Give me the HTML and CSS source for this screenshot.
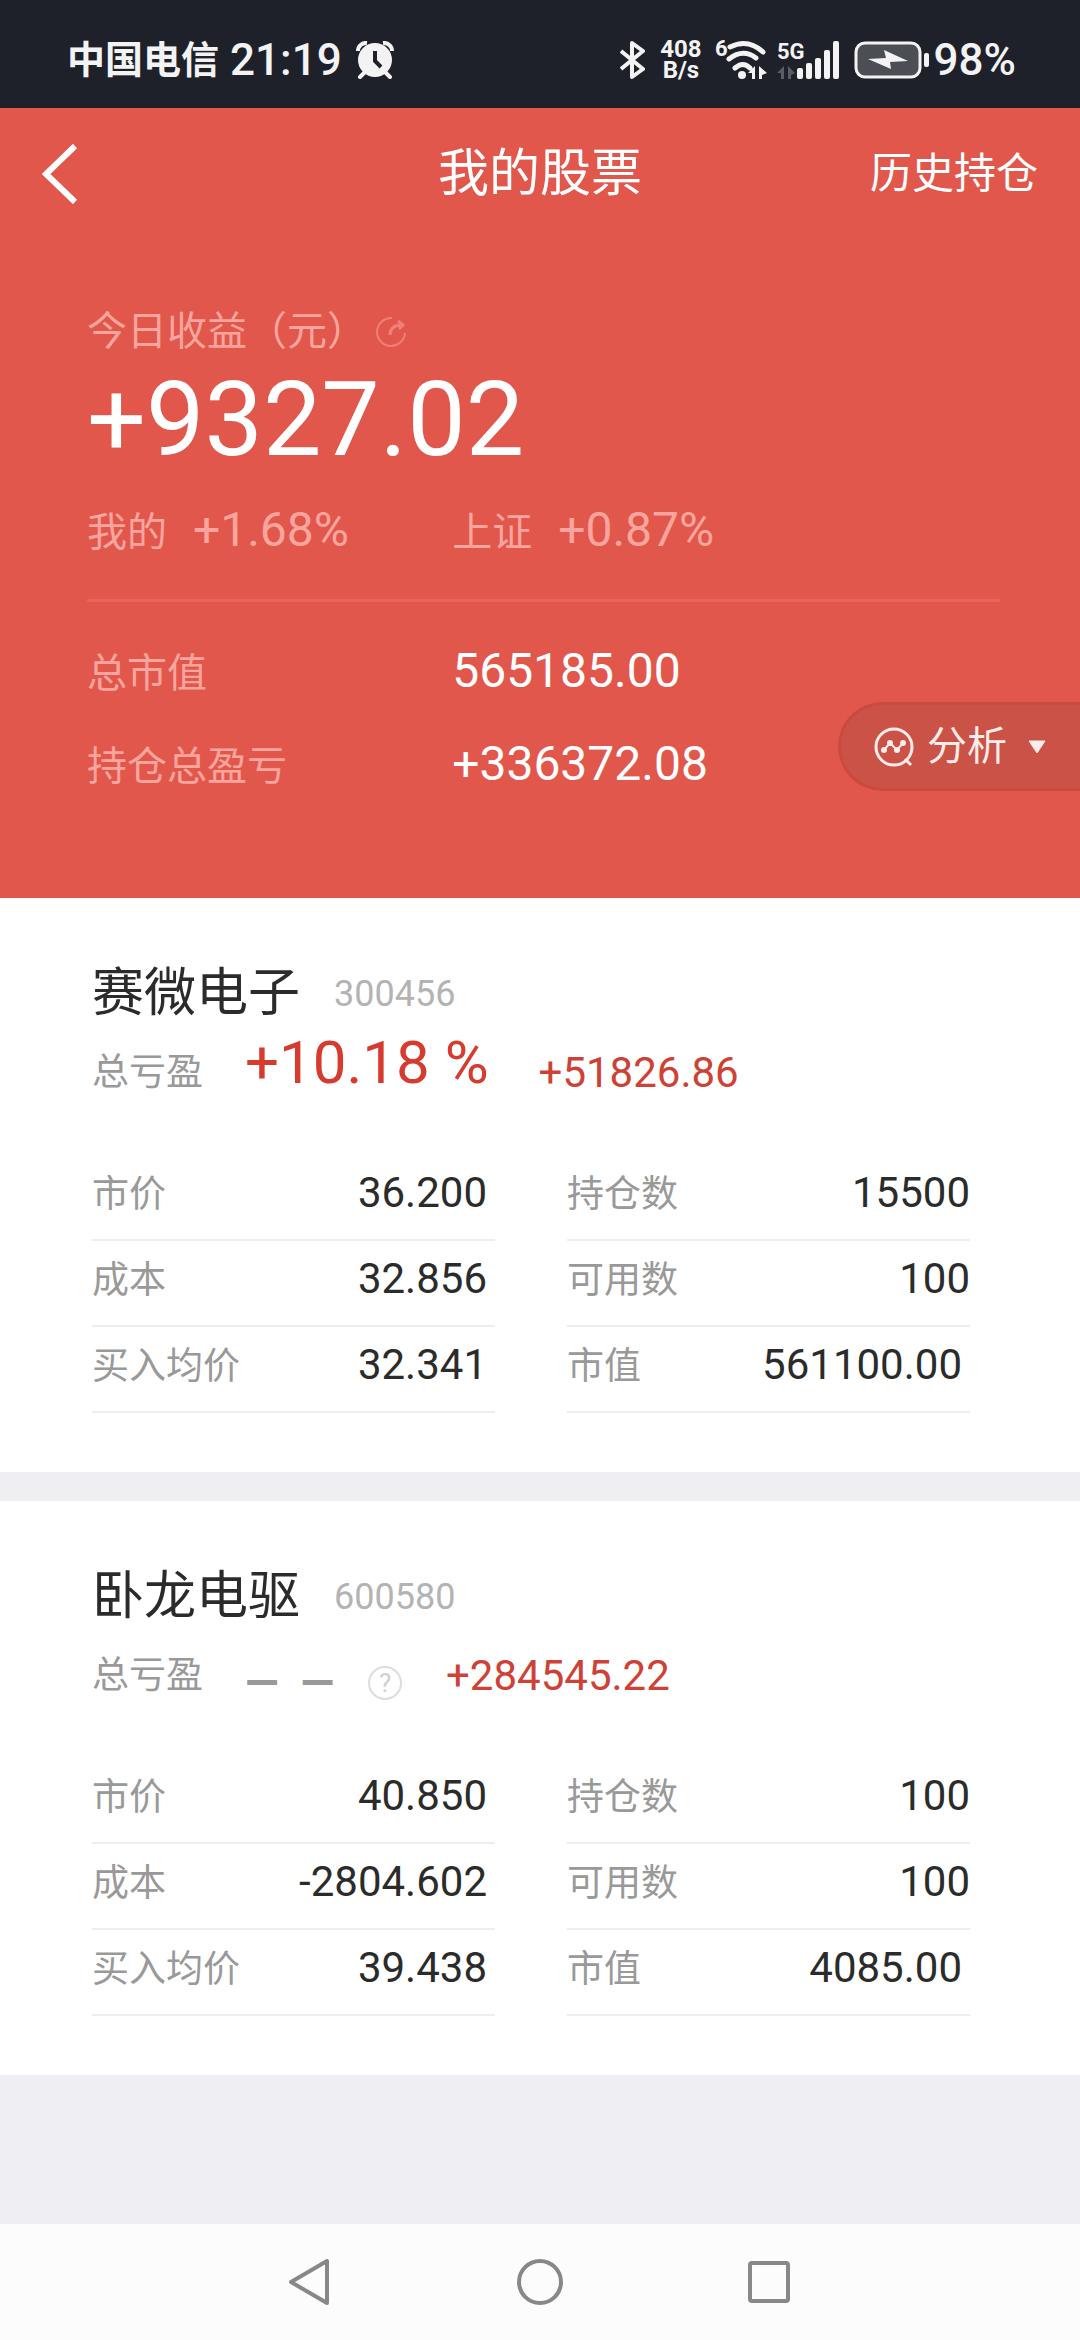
FILE: index.html
```html
<!DOCTYPE html>
<html lang="zh-CN">

<head>
    <meta charset="UTF-8">
    <meta name="viewport" content="width=device-width, initial-scale=1.0">
    <title>我的股票</title>
    <link rel="stylesheet" href="styles.css">
</head>

<body>
    <div class="status-bar">
        <div class="status-left">
            <span class="carrier">中国电信</span>
            <span class="clock">21:19</span>
            <svg class="alarm" width="38" height="38" viewBox="0 0 38 38">
                <path d="M2 10a8 8 0 0 1 9-8M36 10a8 8 0 0 0-9-8" fill="none" stroke="#f3f3f4" stroke-width="4" />
                <path d="M9 31l-5 5M29 31l5 5" stroke="#f3f3f4" stroke-width="4" stroke-linecap="round" />
                <circle cx="19" cy="19" r="17" fill="#f3f3f4" />
                <path d="M19 10v10l6 6" fill="none" stroke="#1f212a" stroke-width="4" />
            </svg>
        </div>
        <div class="status-right">
            <svg width="26" height="40" viewBox="0 0 26 40">
                <path d="M1 11l22 18-11 8V3l11 8L1 29" fill="none" stroke="#f3f3f4" stroke-width="4" stroke-linejoin="round" />
            </svg>
            <div class="net-speed">
                <span>408</span>
                <span>B/s</span>
            </div>
            <svg class="wifi" width="52" height="42" viewBox="0 0 52 42">
                <text x="0" y="17" class="wifi-gen">6</text>
                <path d="M15 8q18-9 33 5M14 20q14-11 27-1M20 29q8-7 15 0" fill="none" stroke="#f3f3f4" stroke-width="5" stroke-linecap="round" />
                <circle cx="27" cy="36" r="4" fill="#f3f3f4" />
                <path d="M33 34l7-7v13h-3v-6zM44 27l8 7-5 2v4h-3z" fill="#f3f3f4" />
            </svg>
            <svg class="signal" width="64" height="40" viewBox="0 0 64 40">
                <text x="0" y="19" class="signal-gen">5G</text>
                <path d="M0 33l7-7v13H4v-6zM11 26l7 7-4 2v4h-3z" fill="#5b5d64" />
                <g fill="#f3f3f4">
                    <rect x="20" y="28" width="6" height="11" rx="2" />
                    <rect x="29" y="23" width="6" height="16" rx="2" />
                    <rect x="38" y="18" width="6" height="21" rx="2" />
                    <rect x="47" y="10" width="6" height="29" rx="2" />
                    <rect x="56" y="1" width="6" height="38" rx="2" />
                </g>
            </svg>
            <svg class="battery" width="76" height="40" viewBox="0 0 76 40">
                <rect x="2" y="3" width="64" height="34" rx="9" fill="#4c4e56" stroke="#f3f3f4" stroke-width="3" />
                <path d="M14 19l18-1-2-8 24 11-18 1 1 7z" fill="#f3f3f4" />
                <rect x="70" y="13" width="5" height="14" rx="2" fill="#f3f3f4" />
            </svg>
            <span class="battery-level">98%</span>
        </div>
    </div>

    <header class="header">
        <button class="back" aria-label="返回">
            <svg width="36" height="60" viewBox="0 0 36 60">
                <path d="M33 2L4 30l29 28" fill="none" stroke="#fff" stroke-width="6" />
            </svg>
        </button>
        <h1>我的股票</h1>
        <a class="history" href="#">历史持仓</a>
    </header>

    <section class="summary">
        <div class="today-label">
            <span>今日收益（元）</span>
            <svg width="32" height="32" viewBox="0 0 32 32">
                <path d="M17 2A14 14 0 1 0 30 17" fill="none" stroke="#f07f78" stroke-width="2" />
                <path d="M15 19c0-6 3-10 12-10M23 5l5 4-4 4" fill="none" stroke="#f07f78" stroke-width="3" />
            </svg>
        </div>
        <p class="today-value">+9327.02</p>
        <div class="summary-row rates">
            <p><span class="rate-name">我的</span><span>+1.68%</span></p>
            <p><span class="rate-name">上证</span><span>+0.87%</span></p>
        </div>
        <hr>
        <dl class="totals">
            <div class="summary-row">
                <dt>总市值</dt>
                <dd>565185.00</dd>
            </div>
            <div class="summary-row">
                <dt>持仓总盈亏</dt>
                <dd>+336372.08</dd>
            </div>
        </dl>
        <button class="analyse">
            <svg width="40" height="40" viewBox="0 0 40 40">
                <circle cx="20" cy="20" r="18" fill="none" stroke="#fdecea" stroke-width="3" />
                <path d="M31 32l6 6" stroke="#fdecea" stroke-width="3" />
                <path d="M10 23l6-7 7 7 6-7" fill="none" stroke="#fdecea" stroke-width="2" />
                <g fill="#fdecea">
                    <circle cx="10" cy="23" r="3" />
                    <circle cx="16" cy="16" r="3" />
                    <circle cx="23" cy="23" r="3" />
                    <circle cx="29" cy="16" r="3" />
                </g>
            </svg>
            <span>分析</span>
            <svg class="caret" width="18" height="14" viewBox="0 0 18 14">
                <path d="M1 1h16L9 13z" fill="#fdecea" stroke="#fdecea" stroke-linejoin="round" />
            </svg>
        </button>
    </section>

    <main>
        <article class="stock">
            <div class="stock-title">
                <h2>赛微电子</h2>
                <span class="code">300456</span>
            </div>
            <div class="profit">
                <span class="profit-label">总亏盈</span>
                <span class="profit-rate">+10.18 %</span>
                <span class="profit-amount">+51826.86</span>
            </div>
            <dl class="details">
                <div>
                    <dt>市价</dt>
                    <dd>36.200</dd>
                </div>
                <div>
                    <dt>持仓数</dt>
                    <dd>15500</dd>
                </div>
                <div>
                    <dt>成本</dt>
                    <dd>32.856</dd>
                </div>
                <div>
                    <dt>可用数</dt>
                    <dd>100</dd>
                </div>
                <div>
                    <dt>买入均价</dt>
                    <dd>32.341</dd>
                </div>
                <div class="market-value">
                    <dt>市值</dt>
                    <dd>561100.00</dd>
                </div>
            </dl>
        </article>

        <article class="stock">
            <div class="stock-title">
                <h2>卧龙电驱</h2>
                <span class="code">600580</span>
            </div>
            <div class="profit">
                <span class="profit-label">总亏盈</span>
                <span class="profit-empty"><span>—</span><span>—</span></span>
                <button class="help" aria-label="说明">?</button>
                <span class="profit-amount">+284545.22</span>
            </div>
            <dl class="details">
                <div>
                    <dt>市价</dt>
                    <dd>40.850</dd>
                </div>
                <div>
                    <dt>持仓数</dt>
                    <dd>100</dd>
                </div>
                <div>
                    <dt>成本</dt>
                    <dd>-2804.602</dd>
                </div>
                <div>
                    <dt>可用数</dt>
                    <dd>100</dd>
                </div>
                <div>
                    <dt>买入均价</dt>
                    <dd>39.438</dd>
                </div>
                <div class="market-value">
                    <dt>市值</dt>
                    <dd>4085.00</dd>
                </div>
            </dl>
        </article>
    </main>

    <nav class="nav-bar">
        <button aria-label="返回">
            <svg width="48" height="50" viewBox="0 0 48 50">
                <path d="M40 4v42L4 25z" fill="none" stroke="#888" stroke-width="4" stroke-linejoin="round" />
            </svg>
        </button>
        <button aria-label="主页">
            <svg width="48" height="50" viewBox="0 0 48 50">
                <circle cx="24" cy="25" r="21" fill="none" stroke="#888" stroke-width="4" />
            </svg>
        </button>
        <button aria-label="最近任务">
            <svg width="48" height="50" viewBox="0 0 48 50">
                <rect x="5" y="6" width="38" height="38" rx="2" fill="none" stroke="#888" stroke-width="4" />
            </svg>
        </button>
    </nav>
</body>

</html>
```

FILE: styles.css
```css
* {
    box-sizing: border-box;
}

body {
    display: flex;
    flex-direction: column;
    min-height: 100vh;
    margin: 0;
    background-color: #efeef3;
    color: #2b2b2b;
    font-family: Roboto, "Noto Sans CJK SC", sans-serif;
}

h1,
h2,
p,
dl,
dd {
    margin: 0;
    font-weight: normal;
}

button {
    padding: 0;
    border: none;
    background: none;
    color: inherit;
    font-family: inherit;
    cursor: pointer;
}

svg {
    display: block;
    flex: none;
}

/* status bar */
.status-bar {
    display: flex;
    justify-content: space-between;
    align-items: center;
    padding: 36px 64px 24px 67px;
    background-color: #1f212a;
    color: #f3f3f4;
}

.status-left,
.status-right {
    display: flex;
    align-items: center;
    height: 48px;
    line-height: 48px;
}

.carrier {
    font-size: 38px;
    font-weight: bold;
}

.clock,
.battery-level {
    font-size: 44px;
    font-weight: 500;
}

.clock {
    margin: 0 14px 0 11px;
}

.net-speed {
    display: grid;
    margin: 0 13px 0 14px;
    font-size: 24px;
    font-weight: bold;
    line-height: 21px;
    text-align: center;
}

.wifi {
    overflow: visible;
}

.wifi-gen,
.signal-gen {
    fill: #f3f3f4;
    font-size: 22px;
    font-weight: bold;
}

.signal {
    overflow: visible;
    margin: 0 13px 0 10px;
}

.battery-level {
    margin-left: 4px;
}

/* page header */
.header {
    display: grid;
    grid-template-columns: 1fr auto 1fr;
    align-items: center;
    height: 132px;
    padding: 0 42px;
    background-color: #e2574c;
    color: #fff;
    line-height: 56px;
}

.back {
    justify-self: start;
}

.header h1 {
    font-size: 51px;
}

.history {
    justify-self: end;
    color: #fff;
    font-size: 42px;
    text-decoration: none;
}

/* summary */
.summary {
    position: relative;
    padding: 62px 80px 101px 87px;
    background-color: #e2574c;
    color: #fff;
}

.today-label,
.rates,
.totals dt {
    color: #f9a59e;
}

.today-label {
    display: flex;
    align-items: center;
    gap: 8px;
    font-size: 40px;
    line-height: 60px;
}

.today-value {
    font-size: 104px;
    line-height: 116px;
}

.summary-row {
    display: grid;
    grid-template-columns: 40% 1fr;
    font-size: 48px;
    line-height: 60px;
}

.rates {
    margin-top: 22px;
}

.rates p {
    display: flex;
    gap: 26px;
}

.rate-name,
.totals dt {
    padding-top: 3px;
    font-size: 40px;
}

.summary hr {
    height: 3px;
    margin: 36px 0 39px;
    border: none;
    background-color: #e8655c;
}

.totals {
    display: grid;
    gap: 30px;
}

.analyse {
    position: absolute;
    right: 0;
    bottom: 107px;
    display: flex;
    align-items: center;
    height: 89px;
    padding: 0 34px 0 33px;
    border: 3px solid #c94a41;
    border-right: none;
    border-radius: 45px 0 0 45px;
    background-color: #cb5246;
    color: #fdecea;
    font-size: 40px;
    line-height: 48px;
}

.analyse span {
    margin: 0 21px 0 13px;
}

/* stock cards */
.stock {
    padding: 64px 110px 59px 92px;
    background-color: #fff;
}

.stock + .stock {
    margin-top: 29px;
}

.stock-title {
    display: flex;
    align-items: center;
    gap: 34px;
    line-height: 64px;
}

.stock-title h2 {
    font-size: 52px;
}

.code {
    color: #b3b3b3;
    font-size: 36px;
}

.profit {
    display: flex;
    align-items: flex-end;
    height: 68px;
    margin-top: 3px;
    line-height: 48px;
}

.profit-label {
    margin-right: 42px;
    color: #999;
    font-size: 37px;
}

.profit-rate {
    margin-right: 50px;
    color: #d63b2f;
    font-size: 60px;
    line-height: 68px;
}

.profit-amount {
    color: #cd4136;
    font-size: 42px;
}

.profit-empty {
    display: flex;
    gap: 22px;
    color: #999;
    font-size: 44px;
    font-weight: bold;
    line-height: 34px;
}

.help {
    width: 34px;
    height: 34px;
    margin: 0 44px 0 34px;
    border: 2px solid #ddd;
    border-radius: 50%;
    color: #d0d0d0;
    font-size: 26px;
    line-height: 30px;
}

.details {
    display: grid;
    grid-template-columns: 1fr 1fr;
    column-gap: 72px;
    margin-top: 58px;
}

.details div {
    display: flex;
    justify-content: space-between;
    padding: 14px 0 20px;
    border-bottom: 2px solid #eee;
    line-height: 48px;
}

.details div:nth-child(odd),
.details .market-value {
    padding-right: 8px;
}

.details dt {
    padding-top: 2px;
    color: #999;
    font-size: 37px;
}

.details dd {
    font-size: 42px;
}

/* system navigation */
.nav-bar {
    display: flex;
    justify-content: center;
    align-items: center;
    gap: 181px;
    height: 116px;
    margin-top: auto;
    background-color: #fcfcfc;
}
```
